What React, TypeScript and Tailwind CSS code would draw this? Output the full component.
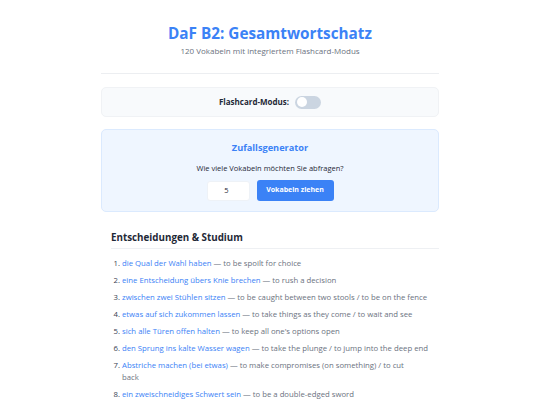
import React from "react";

type Entry = { de: string; en: string; brk?: string };

const vocab: Entry[] = [
  { de: "die Qual der Wahl haben", en: "to be spoilt for choice" },
  { de: "eine Entscheidung übers Knie brechen", en: "to rush a decision" },
  { de: "zwischen zwei Stühlen sitzen", en: "to be caught between two stools / to be on the fence" },
  { de: "etwas auf sich zukommen lassen", en: "to take things as they come / to wait and see" },
  { de: "sich alle Türen offen halten", en: "to keep all one's options open" },
  { de: "den Sprung ins kalte Wasser wagen", en: "to take the plunge / to jump into the deep end" },
  { de: "Abstriche machen (bei etwas)", en: "to make compromises (on something) / to cut", brk: "back" },
  { de: "ein zweischneidiges Schwert sein", en: "to be a double-edged sword" },
];

export default function App() {
  return (
    <div className="min-h-screen bg-white" style={{ fontFamily: '"Open Sans", "DejaVu Sans", sans-serif' }}>
      <div className="mx-auto w-[338px]">
        {/* header */}
        <header className="border-b border-[#eceef1] pt-[21px] pb-[16px] text-center">
          <h1 className="text-[15.3px] font-bold leading-[24px] text-[#3b82f6]">DaF B2: Gesamtwortschatz</h1>
          <p className="text-[8px] leading-[12px] text-[#6b7280]">120 Vokabeln mit integriertem Flashcard-Modus</p>
        </header>

        {/* flashcard toggle */}
        <div className="mt-[13px] flex h-[30px] items-center justify-center gap-[6px] rounded-[5px] border border-[#f0f2f5] bg-[#f8fafc]">
          <span className="text-[8px] font-bold text-[#1f2937]">Flashcard-Modus:</span>
          <span className="relative inline-block h-[13px] w-[26px] rounded-full bg-[#cbd5e1]">
            <span className="absolute left-[2px] top-[1.5px] h-[10px] w-[10px] rounded-full bg-white" />
          </span>
        </div>

        {/* random picker */}
        <div className="mt-[12px] rounded-[5px] border border-[#dbeafe] bg-[#eff6ff] pt-[11px] pb-[10px] text-center">
          <h3 className="text-[9.2px] font-bold leading-[14px] text-[#3b82f6]">Zufallsgenerator</h3>
          <p className="mt-[7px] text-[7.5px] leading-[12px] text-[#1f2937]">Wie viele Vokabeln möchten Sie abfragen?</p>
          <div className="mt-[6px] flex items-center justify-center gap-[7px]">
            <div className="flex h-[20px] w-[43px] items-center justify-center rounded-[3px] border border-[#eef2f7] bg-white pr-[3px] text-[7.5px] text-[#1f2937]">5</div>
            <div className="flex h-[21px] w-[77px] items-center justify-center rounded-[3px] bg-[#3b82f6] text-[7px] font-bold text-white">Vokabeln ziehen</div>
          </div>
        </div>

        {/* category */}
        <section className="ml-[10px] mt-[19px]">
          <h2 className="border-b border-[#eef0f3] pb-[3px] text-[9.8px] font-bold leading-[14px] text-[#1f2937]">Entscheidungen &amp; Studium</h2>
          <ol className="mt-[8px] list-decimal pl-[11px] pr-[2px] text-[7.75px] leading-[12px] text-[#6b7280] marker:text-[#374151]">
            {vocab.map((v) => (
              <li key={v.de} className="mb-[5px]">
                <span className="text-[#3b82f6]">{v.de}</span> — {v.en}
                {v.brk && (
                  <>
                    <br />
                    {v.brk}
                  </>
                )}
              </li>
            ))}
          </ol>
        </section>
      </div>
    </div>
  );
}
